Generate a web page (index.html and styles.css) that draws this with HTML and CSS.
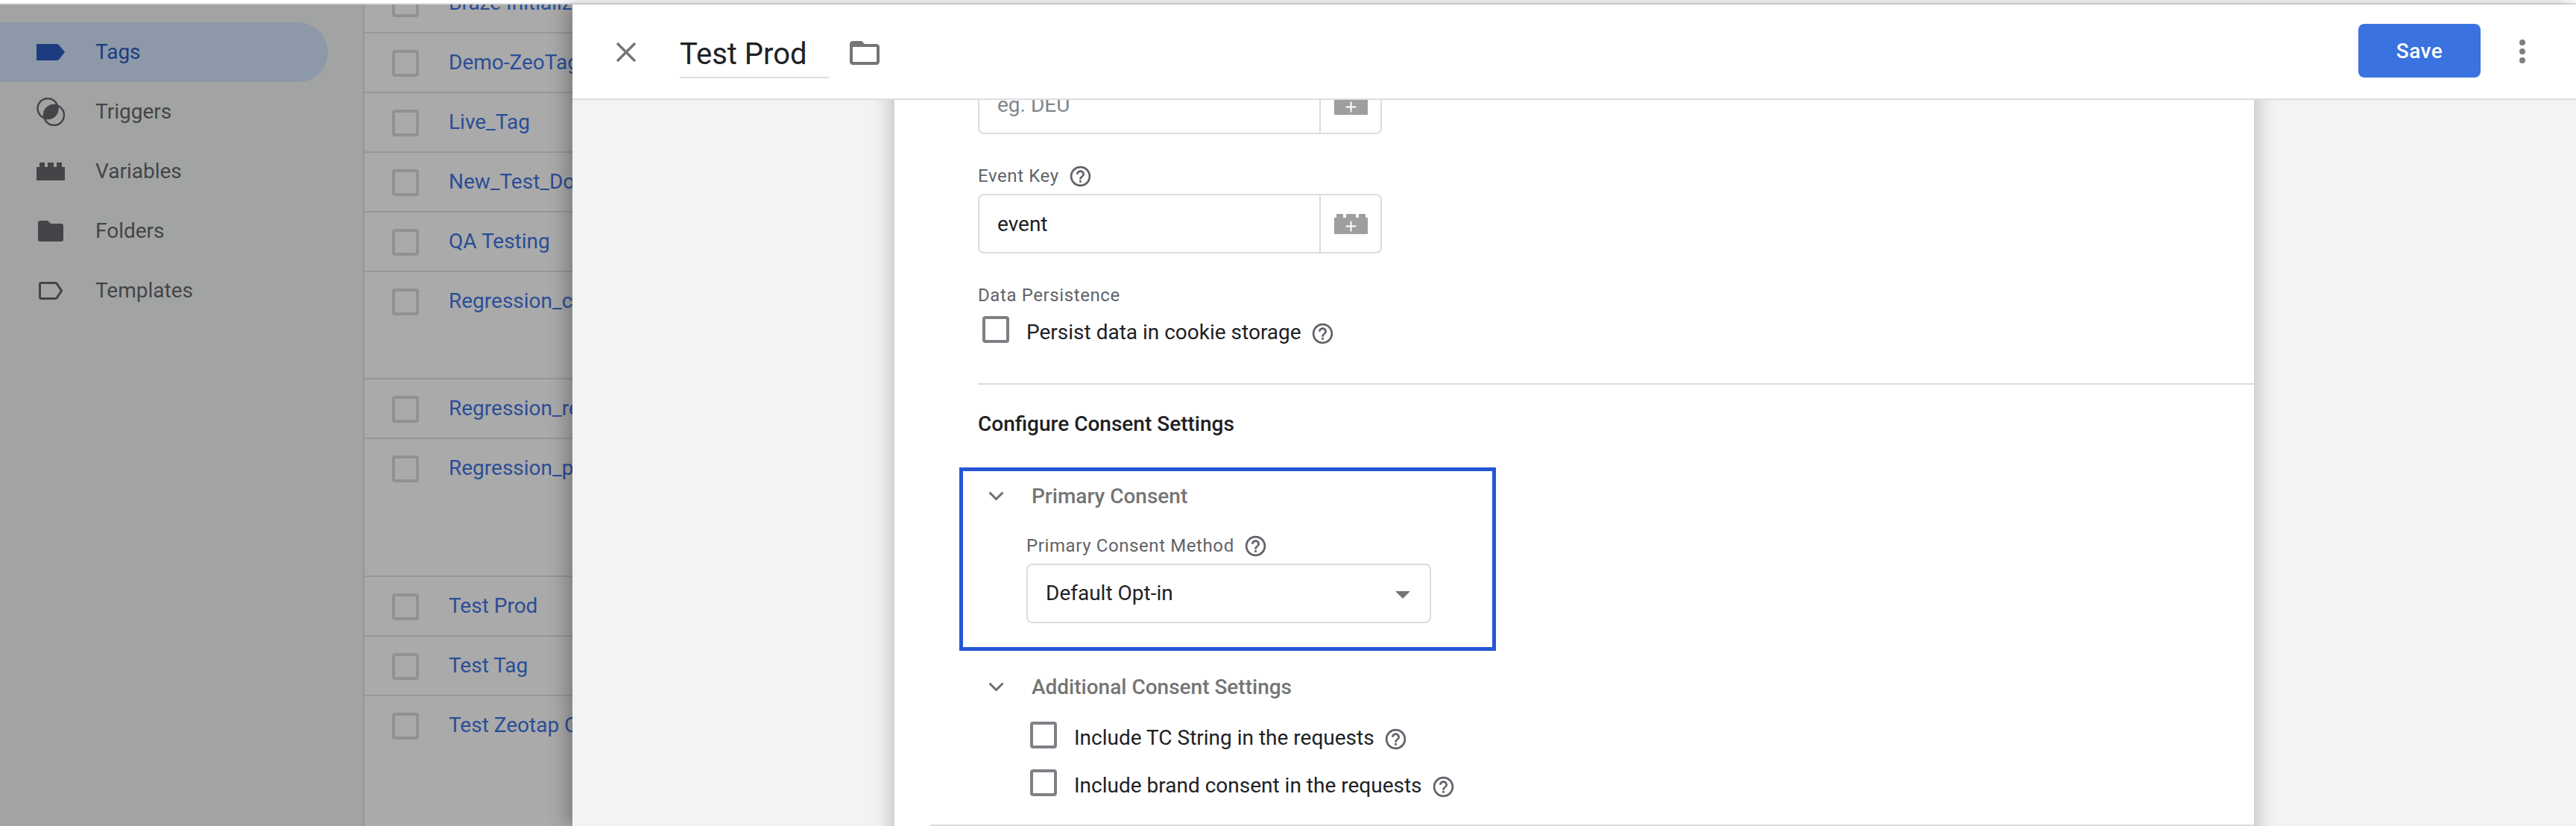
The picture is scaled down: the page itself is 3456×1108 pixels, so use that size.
FILE: index.html
```html
<!DOCTYPE html>
<html lang="en">
<head>
<meta charset="utf-8">
<title>Test Prod</title>
<link rel="stylesheet" href="styles.css">
</head>
<body>
<svg class="defs" width="0" height="0" aria-hidden="true">
  <symbol id="help" viewBox="0 0 24 24"><path d="M11 18h2v-2h-2v2zm1-16C6.48 2 2 6.48 2 12s4.48 10 10 10 10-4.48 10-10S17.52 2 12 2zm0 18c-4.41 0-8-3.59-8-8s3.59-8 8-8 8 3.59 8 8-3.59 8-8 8zm0-14c-2.21 0-4 1.79-4 4h2c0-1.1.9-2 2-2s2 .9 2 2c0 2-3 1.750-3 5h2c0-2.250 3-2.500 3-5 0-2.210-1.790-4-4-4z"/></symbol>
  <symbol id="varplus" viewBox="0 0 45 27"><path d="M0 27V5h3V0h9v5h4V0h13v5h4V0h9v5h3v22z"/><path class="plus" d="M21.500 9.500h2v6h6v2h-6v6h-2v-6h-6v-2h6z"/></symbol>
  <symbol id="chev" viewBox="0 0 21 13"><path d="M1.500 1.500l9 9 9-9" fill="none" stroke="currentColor" stroke-width="3"/></symbol>
  <clipPath id="trigger-clip"><circle cx="15" cy="14.500" r="13.500"/></clipPath>
</svg>
<div class="app">
  <div class="top-strip"></div>
  <div class="workspace">
    <nav class="sidebar">
      <a class="nav-item nav-active">
        <span class="nav-icon"><svg width="38" height="22" viewBox="0 0 38 22"><path d="M0 0h27c1.500 0 2.700.7 3.500 1.800L38 11l-7.500 9.200c-.8 1.100-2 1.800-3.500 1.800H0z" fill="currentColor"/></svg></span>
        <span>Tags</span>
      </a>
      <a class="nav-item">
        <span class="nav-icon"><svg width="38" height="38" viewBox="0 0 38 38"><circle cx="23.500" cy="23.500" r="13.500" fill="currentColor" clip-path="url(#trigger-clip)"/><circle cx="15" cy="14.500" r="13.500" fill="none" stroke="currentColor" stroke-width="2.500"/><circle cx="23.500" cy="23.500" r="13.500" fill="none" stroke="currentColor" stroke-width="2.500"/></svg></span>
        <span>Triggers</span>
      </a>
      <a class="nav-item">
        <span class="nav-icon"><svg width="38" height="24" viewBox="0 0 38 24"><path d="M0 24V6h4V0h7v6h4V0h8v6h4V0h7v6h4v18z" fill="currentColor"/></svg></span>
        <span>Variables</span>
      </a>
      <a class="nav-item">
        <span class="nav-icon"><svg width="34" height="28" viewBox="0 0 34 28"><path d="M3 0h10l4 4h14c1.700 0 3 1.300 3 3v18c0 1.700-1.300 3-3 3H3c-1.700 0-3-1.300-3-3V3c0-1.700 1.300-3 3-3z" fill="currentColor"/></svg></span>
        <span>Folders</span>
      </a>
      <a class="nav-item">
        <span class="nav-icon"><svg width="32" height="24" viewBox="0 0 32 24"><path d="M3 1.500h19c1 0 1.800.4 2.400 1.200L30.500 12l-6.100 9.300c-.6.800-1.400 1.200-2.400 1.200H3c-.8 0-1.500-.7-1.500-1.500V3c0-.8.7-1.500 1.500-1.500z" fill="none" stroke="currentColor" stroke-width="3"/></svg></span>
        <span>Templates</span>
      </a>
    </nav>
    <main class="tag-list">
      <div class="row"><span class="row-box"></span><span class="row-name">Braze Initialization</span></div>
      <div class="row"><span class="row-box"></span><span class="row-name">Demo-ZeoTag</span></div>
      <div class="row"><span class="row-box"></span><span class="row-name">Live_Tag</span></div>
      <div class="row"><span class="row-box"></span><span class="row-name">New_Test_Domain</span></div>
      <div class="row"><span class="row-box"></span><span class="row-name">QA Testing</span></div>
      <div class="row row-144"><span class="row-box"></span><span class="row-name">Regression_consent</span></div>
      <div class="row"><span class="row-box"></span><span class="row-name">Regression_retest</span></div>
      <div class="row row-185"><span class="row-box"></span><span class="row-name">Regression_prod</span></div>
      <div class="row"><span class="row-box"></span><span class="row-name">Test Prod</span></div>
      <div class="row"><span class="row-box"></span><span class="row-name">Test Tag</span></div>
      <div class="row row-last"><span class="row-box"></span><span class="row-name">Test Zeotap Consent</span></div>
    </main>
  </div>

  <section class="panel">
    <header class="panel-head">
      <svg class="close-icon" width="28" height="28" viewBox="0 0 28 28"><path d="M2 2l24 24M26 2L2 26" fill="none" stroke="currentColor" stroke-width="3.400"/></svg>
      <div class="title">Test Prod</div>
      <svg class="folder-icon" width="40" height="32" viewBox="0 0 40 32"><path d="M4 0h12l4 4h16c2.200 0 4 1.800 4 4v20c0 2.200-1.800 4-4 4H4c-2.200 0-4-1.800-4-4V4c0-2.200 1.800-4 4-4zm0 8v20h32V8z" fill="currentColor" fill-rule="evenodd"/></svg>
      <button class="save">Save</button>
      <div class="dots"><i></i><i></i><i></i></div>
    </header>
    <div class="panel-body">
      <div class="card">
        <div class="input">
          <span class="input-text placeholder">eg. DEU</span>
          <span class="input-side"><svg class="var-icon" width="45" height="27"><use href="#varplus"/></svg></span>
        </div>
        <div class="label label-event">Event Key <svg class="help" width="33" height="33"><use href="#help"/></svg></div>
        <div class="input">
          <span class="input-text">event</span>
          <span class="input-side"><svg class="var-icon" width="45" height="27"><use href="#varplus"/></svg></span>
        </div>
        <div class="label label-data">Data Persistence</div>
        <div class="check check-persist">
          <span class="box"></span>
          <span class="check-text">Persist data in cookie storage</span>
          <svg class="help" width="33" height="33"><use href="#help"/></svg>
        </div>
        <div class="divider"></div>
        <h2 class="section-title">Configure Consent Settings</h2>
        <div class="highlight">
          <div class="group-head"><svg class="chev" width="21" height="13"><use href="#chev"/></svg><span>Primary Consent</span></div>
          <div class="label label-method">Primary Consent Method <svg class="help" width="33" height="33"><use href="#help"/></svg></div>
          <div class="select"><span class="select-text">Default Opt-in</span><i class="caret"></i></div>
        </div>
        <div class="group-head group-additional"><svg class="chev" width="21" height="13"><use href="#chev"/></svg><span>Additional Consent Settings</span></div>
        <div class="check check-tc">
          <span class="box"></span>
          <span class="check-text">Include TC String in the requests</span>
          <svg class="help" width="33" height="33"><use href="#help"/></svg>
        </div>
        <div class="check check-brand">
          <span class="box"></span>
          <span class="check-text">Include brand consent in the requests</span>
          <svg class="help" width="33" height="33"><use href="#help"/></svg>
        </div>
        <div class="divider divider-wide"></div>
      </div>
    </div>
  </section>
</div>
</body>
</html>
```

FILE: styles.css
```css
* { box-sizing: border-box; }
html, body { margin: 0; padding: 0; height: 100%; }
body { font-family: Roboto, "Liberation Sans", sans-serif; font-size: 28px; color: #202124; background: #fff; overflow: hidden; }
.defs { position: absolute; }
.plus { fill: #fff; }

.app { position: relative; width: 3456px; height: 1108px; overflow: hidden; display: flex; flex-direction: column; }
.top-strip { height: 6px; flex: none; background: #fff; border-bottom: 2px solid #e0e0e2; }
.workspace { flex: 1; display: flex; min-height: 0; overflow: hidden; }

.sidebar { width: 487px; flex: none; background: #a2a4a3; padding-top: 24px; }
.nav-item { height: 80px; width: 440px; display: flex; align-items: center; color: #434548; border-radius: 0 40px 40px 0; line-height: 32px; }
.nav-active { background: #8d98a8; color: #1c3c80; }
.nav-icon { width: 38px; margin: 0 41px 0 49px; display: flex; justify-content: center; align-items: center; flex: none; }
.nav-icon svg { display: block; }

.tag-list { flex: 1; min-width: 0; background: #aaa; border-left: 2px solid #959595; margin-top: -41px; }
.row { height: 80px; border-bottom: 2px solid #979797; display: flex; align-items: flex-start; padding: 22px 0 0 37px; white-space: nowrap; color: #2a4e96; line-height: 32px; overflow: hidden; }
.row-144 { height: 144px; }
.row-185 { height: 185px; }
.row-last { height: 200px; border-bottom: 0; }
.row-box { width: 36px; height: 36px; border: 4px solid #919191; border-radius: 4px; flex: none; margin-right: 40px; }
.row-name { margin-top: 1px; }

.panel { position: absolute; left: 768px; top: 6px; right: 0; bottom: 0; display: flex; flex-direction: column; background: #f1f3f4; box-shadow: -8px 0 24px rgba(0,0,0,.28); }
.panel-head { height: 128px; flex: none; background: #fff; border-bottom: 2px solid #dfdfe3; display: flex; align-items: center; padding: 0 68px 0 58px; position: relative; z-index: 2; }
.close-icon { color: #757575; margin-top: 2px; flex: none; }
.title { width: 200px; margin: 12px 0 0 58px; height: 60px; font-size: 40px; line-height: 56px; color: #202124; border-bottom: 2px solid #dcdce0; }
.folder-icon { color: #757575; margin: 4px 0 0 28px; flex: none; }
.save { margin: -2px 0 0 auto; width: 164px; height: 72px; border: 0; border-radius: 8px; background: #3a72e0; color: #fff; font: 500 28px Roboto, sans-serif; padding: 0; letter-spacing: .5px; }
.dots { width: 8px; margin-left: 52px; display: flex; flex-direction: column; gap: 4px; }
.dots i { width: 8px; height: 8px; border-radius: 50%; background: #7f7f7f; display: block; }

.panel-body { flex: 1; min-height: 0; overflow: hidden; }
.card { width: 1824px; margin: -34px 0 0 432px; height: 1200px; background: #fff; padding-left: 112px; box-shadow: 0 0 30px rgba(0,0,0,.28); }

.input { width: 542px; height: 80px; border: 2px solid #dcdce0; border-radius: 8px; display: flex; align-items: center; }
.input-text { flex: 1; padding-left: 24px; line-height: 32px; margin-top: 2px; }
.placeholder { color: #80868b; }
.input-side { width: 82px; height: 100%; border-left: 2px solid #dcdce0; display: flex; align-items: center; justify-content: center; flex: none; }
.var-icon { fill: #9e9e9e; display: block; margin-left: 1px; }

.label { font-size: 24px; line-height: 32px; color: #5f6368; letter-spacing: .6px; display: flex; align-items: center; height: 32px; }
.label .help { margin-left: 12px; }
.label-event { margin-top: 40px; margin-bottom: 8px; }
.label-data { margin-top: 40px; }
.help { fill: #5f6368; flex: none; display: block; }

.check { display: flex; align-items: center; line-height: 36px; height: 36px; }
.check-text { margin-top: 7px; }
.box { width: 36px; height: 36px; border: 4px solid #7d8185; border-radius: 4px; flex: none; margin-right: 23px; }
.check .help { margin: 11px 0 0 12px; }
.check-persist { margin: 12px 0 0 6px; }
.divider { height: 2px; background: #dcdce0; margin-top: 54px; }
.section-title { margin: 37px 0 0; font-size: 28px; font-weight: 500; line-height: 32px; color: #202124; }
.highlight { width: 720px; height: 246px; border: 5px solid #2456d6; margin: 42px 0 0 -25px; padding: 0 0 0 85px; }
.group-head { height: 32px; display: flex; align-items: center; font-weight: 500; color: #757575; }
.group-head .chev { color: #6f6f6f; flex: none; }
.highlight .group-head { margin: 17px 0 0 -51px; }
.group-head span { margin-left: 37px; }
.label-method { margin-top: 35px; }
.select { width: 543px; height: 80px; margin-top: 8px; border: 2px solid #dcdce0; border-radius: 8px; display: flex; align-items: center; padding: 0 26px 0 24px; justify-content: space-between; }
.select-text { margin-top: -2px; }
.caret { width: 0; height: 0; border-left: 10px solid transparent; border-right: 10px solid transparent; border-top: 10px solid #757575; display: block; margin-top: 4px; }
.group-additional { margin: 32px 0 0 14px; }
.check-tc { margin: 31px 0 0 70px; }
.check-brand { margin: 28px 0 0 70px; }
.divider-wide { margin: 38px 0 0 -64px; }
```
